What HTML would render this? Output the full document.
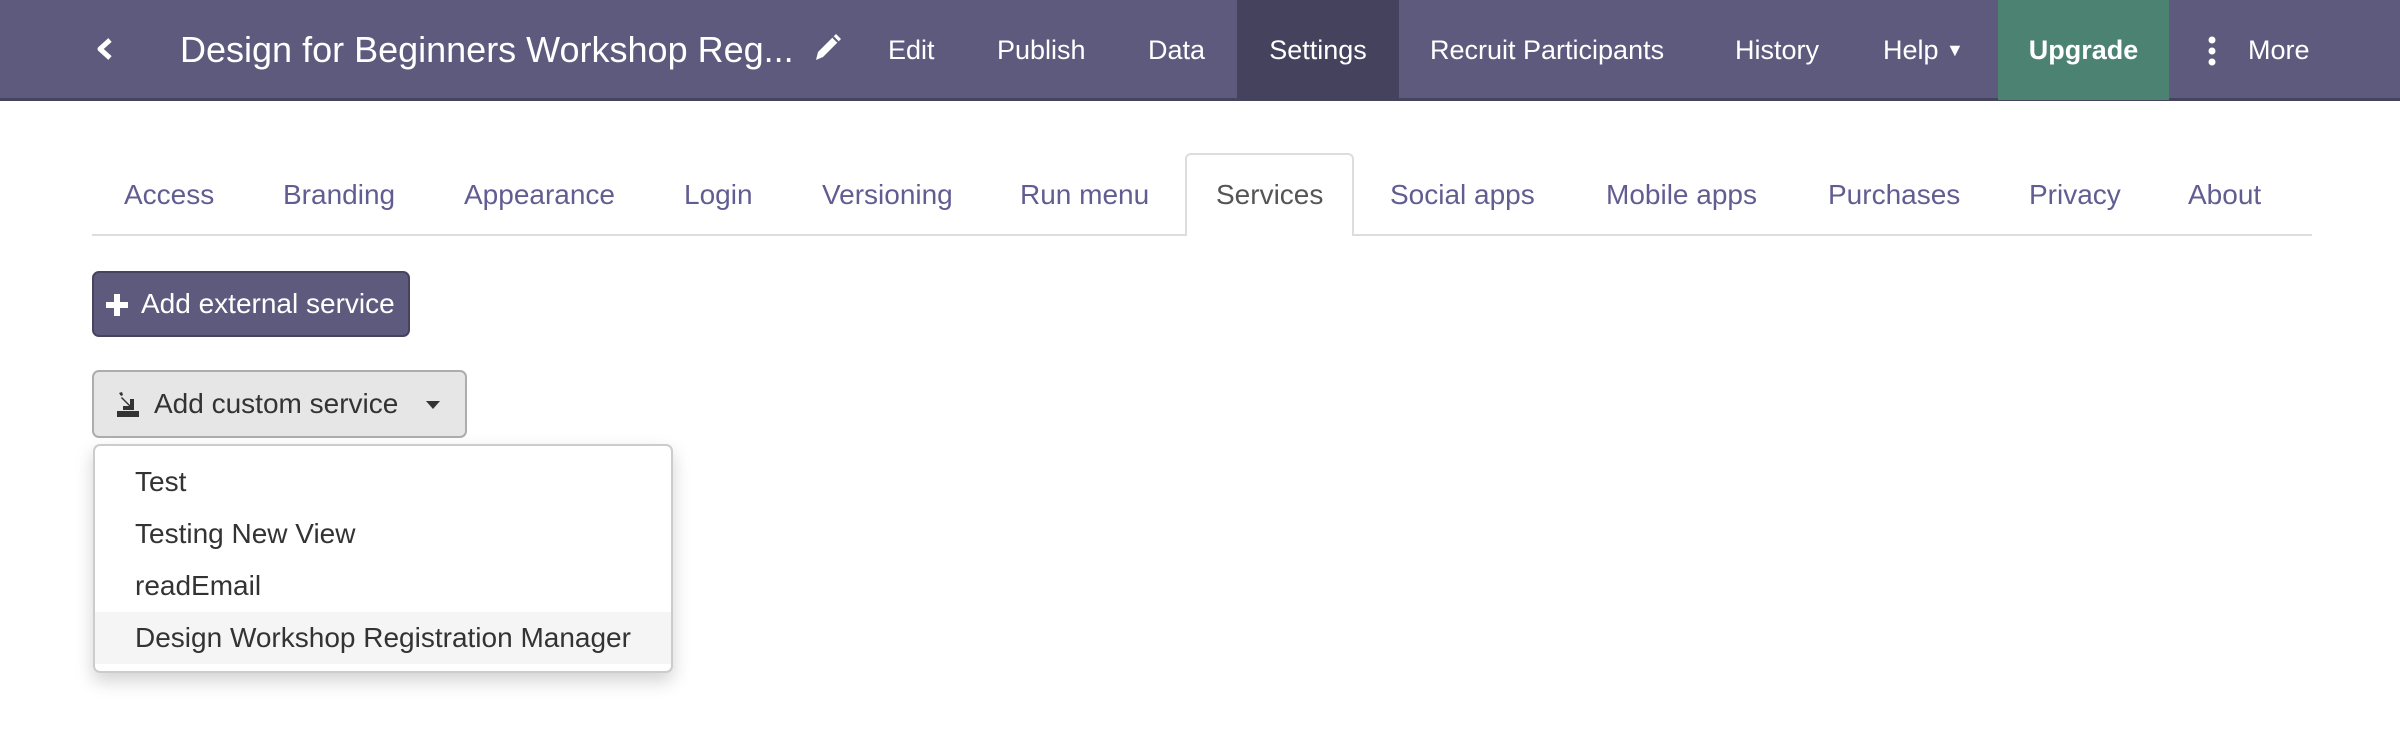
<!DOCTYPE html>
<html><head><meta charset="utf-8"><style>
*{margin:0;padding:0;box-sizing:border-box}
body{width:2400px;height:740px;background:#fff;font-family:"Liberation Sans",Arial,sans-serif;position:relative;overflow:hidden}
.hdr{position:absolute;left:0;top:0;width:2400px;height:101px;background:#5d5a7d;border-bottom:3px solid #46435f}
.n{position:absolute;top:0;height:100px;line-height:100px;color:#fff;font-size:27px;white-space:nowrap}
.tab{position:absolute;top:179px;font-size:28px;color:#625d91;white-space:nowrap}
.item{position:absolute;left:0;width:577px;height:52px;line-height:52px;padding-left:40px;font-size:28px;color:#333}
</style></head><body>
<div class="hdr">
<svg style="position:absolute;left:95px;top:38px" width="20" height="22" viewBox="0 0 20 22"><path d="M15 2 L5 11 L15 20" stroke="#fff" stroke-width="5" fill="none" stroke-linejoin="round"/></svg>
<div class="n" style="left:180px;font-size:36px">Design for Beginners Workshop Reg...</div>
<svg style="position:absolute;left:812px;top:32px" width="32" height="30" viewBox="0 0 32 30"><path d="M24 2 L29 7 L11 25 L4 28 L6 20 Z" fill="#fff"/><path d="M21 5 L26 10" stroke="#5d5a7d" stroke-width="2"/></svg>
<div class="n" style="left:888px">Edit</div>
<div class="n" style="left:997px">Publish</div>
<div class="n" style="left:1148px">Data</div>
<div class="n" style="left:1237px;width:162px;background:#45425e;text-align:center">Settings</div>
<div class="n" style="left:1430px">Recruit Participants</div>
<div class="n" style="left:1735px">History</div>
<div class="n" style="left:1883px">Help <span style="font-size:18px;position:relative;top:-3px">▼</span></div>
<div class="n" style="left:1998px;width:171px;background:#4b8272;text-align:center;font-weight:bold">Upgrade</div>
<svg style="position:absolute;left:2206px;top:36px" width="12" height="30" viewBox="0 0 12 30"><circle cx="6" cy="4" r="3.5" fill="#fff"/><circle cx="6" cy="15" r="3.5" fill="#fff"/><circle cx="6" cy="26" r="3.5" fill="#fff"/></svg>
<div class="n" style="left:2248px">More</div>
</div>
<div style="position:absolute;left:92px;top:234px;width:2220px;height:2px;background:#ddd"></div>
<div style="position:absolute;left:1185px;top:153px;width:169px;height:83px;background:#fff;border:2px solid #ddd;border-bottom:none;border-radius:6px 6px 0 0"></div>
<div class="tab" style="left:124px">Access</div>
<div class="tab" style="left:283px">Branding</div>
<div class="tab" style="left:464px">Appearance</div>
<div class="tab" style="left:684px">Login</div>
<div class="tab" style="left:822px">Versioning</div>
<div class="tab" style="left:1020px">Run menu</div>
<div class="tab" style="left:1216px;color:#555">Services</div>
<div class="tab" style="left:1390px">Social apps</div>
<div class="tab" style="left:1606px">Mobile apps</div>
<div class="tab" style="left:1828px">Purchases</div>
<div class="tab" style="left:2029px">Privacy</div>
<div class="tab" style="left:2188px">About</div>
<div style="position:absolute;left:92px;top:271px;width:318px;height:66px;background:#5d5a7d;border:2px solid #46435f;border-radius:7px;color:#fff;font-size:28px;line-height:62px;padding-left:47px">Add external service</div>
<svg style="position:absolute;left:105px;top:292px" width="24" height="26" viewBox="0 0 24 26"><path d="M12 2 V24 M1 13 H23" stroke="#fff" stroke-width="6"/></svg>
<div style="position:absolute;left:92px;top:370px;width:375px;height:68px;background:#e6e6e6;border:2px solid #adadad;border-radius:7px;color:#333;font-size:28px;line-height:64px;padding-left:60px">Add custom service</div>
<svg style="position:absolute;left:116px;top:391px" width="24" height="26" viewBox="0 0 24 26"><path d="M3 2 L6 1 L7 4 L5 5 Z" fill="#333"/><path d="M6 6 L14 14 L14 8 L18 8 L18 19 L7 19 L7 15 L13 15 L5 7 Z" fill="#333"/><rect x="1" y="20" width="22" height="6" fill="#333"/></svg>
<svg style="position:absolute;left:425px;top:400px" width="16" height="10" viewBox="0 0 16 10"><path d="M1 1 H15 L8 9 Z" fill="#333"/></svg>
<div style="position:absolute;left:93px;top:444px;width:580px;height:229px;background:#fff;border:2px solid #ccc;border-radius:7px;box-shadow:0 8px 18px rgba(0,0,0,.18);overflow:hidden">
<div class="item" style="top:10px">Test</div>
<div class="item" style="top:62px">Testing New View</div>
<div class="item" style="top:114px">readEmail</div>
<div class="item" style="top:166px;background:#f5f5f5">Design Workshop Registration Manager</div>
</div>
</body></html>
